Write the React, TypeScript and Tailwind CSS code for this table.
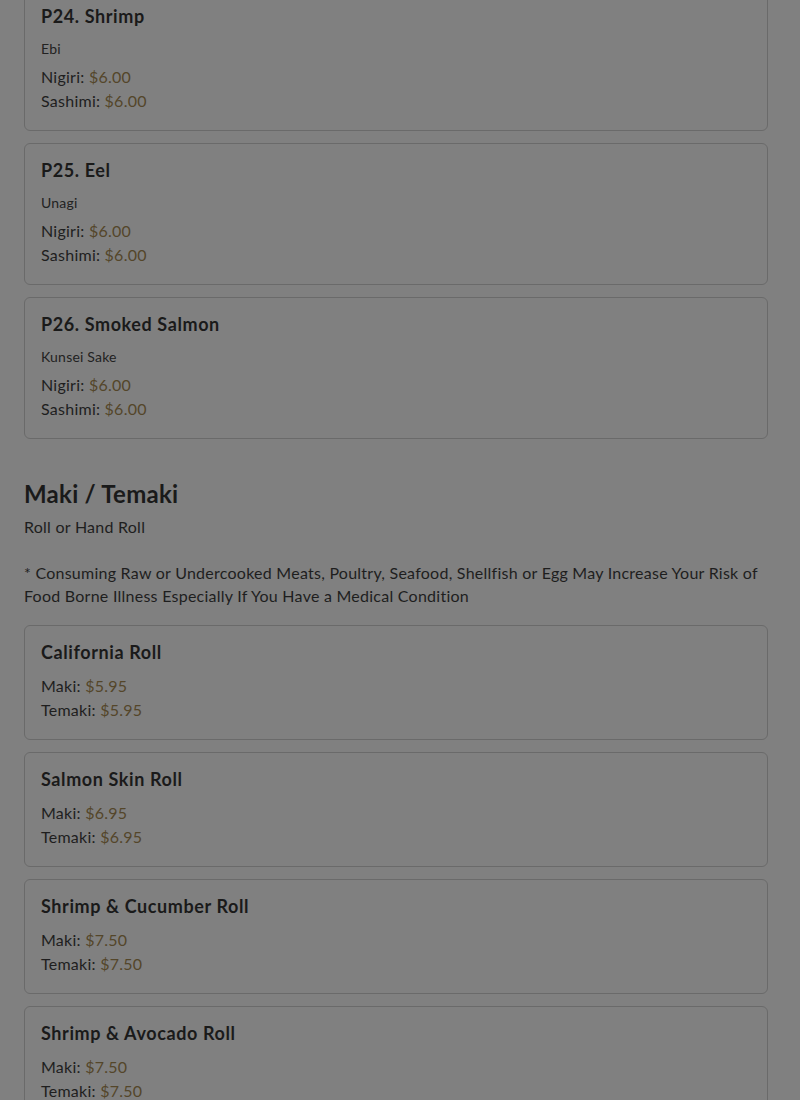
import React from "react";

type Item = { name: string; sub?: string; prices: [string, string][] };

const nigiri: Item[] = [
  { name: "P24. Shrimp", sub: "Ebi", prices: [["Nigiri", "$6.00"], ["Sashimi", "$6.00"]] },
  { name: "P25. Eel", sub: "Unagi", prices: [["Nigiri", "$6.00"], ["Sashimi", "$6.00"]] },
  { name: "P26. Smoked Salmon", sub: "Kunsei Sake", prices: [["Nigiri", "$6.00"], ["Sashimi", "$6.00"]] },
];

const maki: Item[] = [
  { name: "California Roll", prices: [["Maki", "$5.95"], ["Temaki", "$5.95"]] },
  { name: "Salmon Skin Roll", prices: [["Maki", "$6.95"], ["Temaki", "$6.95"]] },
  { name: "Shrimp & Cucumber Roll", prices: [["Maki", "$7.50"], ["Temaki", "$7.50"]] },
  { name: "Shrimp & Avocado Roll", prices: [["Maki", "$7.50"], ["Temaki", "$7.50"]] },
];

function Card({ item }: { item: Item }) {
  return (
    <div className="rounded-[6px] border border-[#6a6a6a] bg-[#808080] px-4 pt-[15px] pb-[17px]">
      <h3
        className={
          "text-[18px] font-bold leading-[22px] tracking-[0.6px] text-[#1a1a1a] " +
          (item.sub ? "mb-[12px]" : "mb-[11px]")
        }
      >
        {item.name}
      </h3>
      {item.sub && (
        <div className="text-[14px] leading-[20px] tracking-[0.2px] text-[#222] mb-[6px]">{item.sub}</div>
      )}
      {item.prices.map(([k, v]) => (
        <div key={k} className="text-[16px] leading-[24px] tracking-[0.25px] text-[#1e1e1e]">
          {k}: <span className="text-[#54462a]">{v}</span>
        </div>
      ))}
    </div>
  );
}

export default function App() {
  return (
    <div
      className="min-h-[1100px] bg-[#808080] overflow-hidden"
      style={{ fontFamily: "Lato, 'Noto Sans', sans-serif" }}
    >
      <div className="pl-6 pr-8 mt-[-11px]">
        <div className="flex flex-col gap-3">
          {nigiri.map((i) => (
            <Card key={i.name} item={i} />
          ))}
        </div>
        <h2 className="mt-[39px] text-[24px] font-bold leading-[32px] tracking-[0.25px] text-[#1a1a1a]">
          Maki / Temaki
        </h2>
        <p className="text-[16px] leading-[24px] tracking-[0.25px] text-[#1e1e1e] mt-[5px]">Roll or Hand Roll</p>
        <p className="text-[16px] leading-[23px] tracking-[0.25px] text-[#1e1e1e] mt-[22px] whitespace-nowrap">
          * Consuming Raw or Undercooked Meats, Poultry, Seafood, Shellfish or Egg May Increase Your Risk of
          <br />
          Food Borne Illness Especially If You Have a Medical Condition
        </p>
        <div className="flex flex-col gap-3 mt-[18px]">
          {maki.map((i) => (
            <Card key={i.name} item={i} />
          ))}
        </div>
      </div>
    </div>
  );
}
